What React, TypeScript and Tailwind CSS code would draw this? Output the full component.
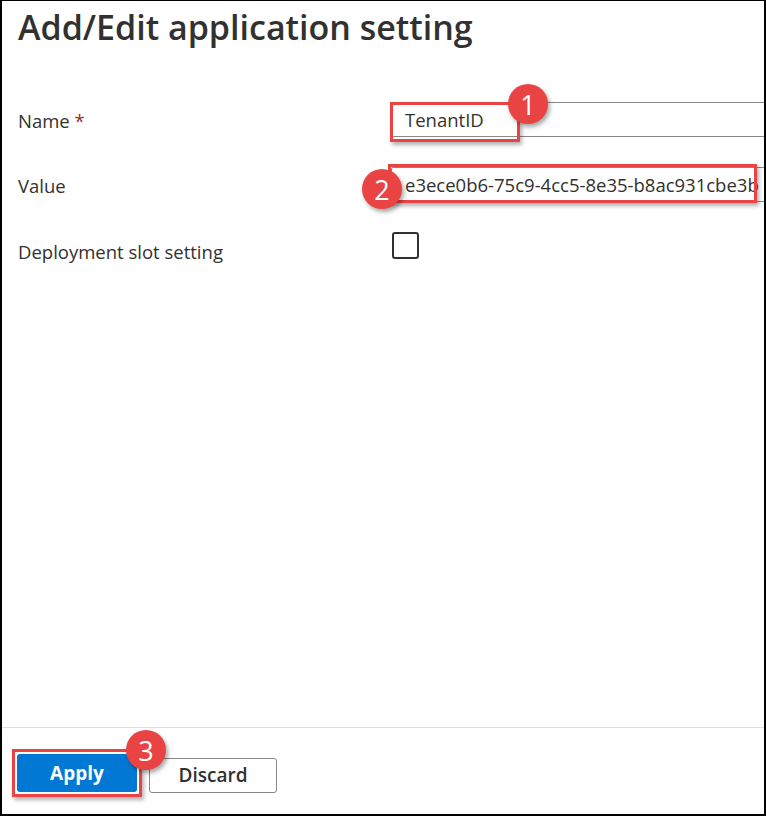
import React from "react";

const font = { fontFamily: '"Open Sans", "Noto Sans", sans-serif' };

const Badge = ({ n, className }: { n: string; className: string }) => (
  <div
    className={`absolute w-[40px] h-[40px] rounded-full bg-[#ea4344] text-white flex items-center justify-center text-[27px] leading-none shadow-[2px_3px_4px_rgba(0,0,0,0.35)] ${className}`}
  >
    {n}
  </div>
);

const App = () => {
  return (
    <div
      className="relative w-[766px] h-[816px] bg-white border-l-2 border-t border-r-2 border-b-2 border-black overflow-hidden flex flex-col text-[#323130]"
      style={font}
    >
      <h1 className="pl-[16px] pt-[2px] text-[34px] font-semibold leading-[48px] whitespace-nowrap">
        Add/Edit application setting
      </h1>

      <div className="mt-[51px] flex flex-col gap-[30px]">
        <div className="flex items-center h-[35px]">
          <label className="shrink-0 w-[389px] pl-[16px] text-[18.5px] pt-[2px]">
            Name <span className="text-[#a4262c]">*</span>
          </label>
          <div className="relative shrink-0">
            <div className="w-[420px] h-[35px] border border-[#8a8886] rounded-[2px] flex items-center pl-[13px] text-[18.5px] whitespace-nowrap">
              TenantID
            </div>
            <div className="absolute left-[-1px] top-0 w-[130px] h-[40px] border-[3px] border-[#ea4344] shadow-[2px_3px_4px_rgba(0,0,0,0.3)]" />
            <Badge n="1" className="left-[117px] top-[-18px]" />
          </div>
        </div>

        <div className="flex items-center h-[35px]">
          <label className="shrink-0 w-[389px] pl-[16px] text-[18.5px] pt-[2px]">Value</label>
          <div className="relative shrink-0">
            <div className="w-[420px] h-[35px] border border-[#8a8886] rounded-[2px] flex items-center pl-[13px] text-[18.5px] whitespace-nowrap">
              e3ece0b6-75c9-4cc5-8e35-b8ac931cbe3b
            </div>
            <div className="absolute left-[-3px] top-[-3px] w-[369px] h-[39px] border-[3px] border-[#ea4344] shadow-[2px_3px_4px_rgba(0,0,0,0.3)]" />
            <Badge n="2" className="left-[-29px] top-[2px]" />
          </div>
        </div>

        <div className="flex items-start h-[35px]">
          <label className="shrink-0 w-[389px] pl-[16px] text-[18.5px] pt-[6px]">Deployment slot setting</label>
          <div className="shrink-0 w-[27px] h-[27px] border-2 border-[#323130] rounded-[3px] ml-[1px]" />
        </div>
      </div>

      <div className="flex-1" />

      <div className="h-[87px] border-t border-[#e1dfdd] flex items-start pl-[15px] pt-[28px] gap-[12px]">
        <div className="relative">
          <div className="w-[130px] h-[48px] border-[3px] border-[#ea4344] -mt-[7px] -ml-[5px] shadow-[2px_3px_4px_rgba(0,0,0,0.3)] flex items-center justify-center">
            <button className="w-[120px] h-[38px] bg-[#0078d4] text-white text-[19px] font-bold rounded-[3px]">
              Apply
            </button>
          </div>
          <Badge n="3" className="left-[109px] top-[-26px]" />
        </div>
        <button className="w-[128px] h-[35px] mt-[2px] -ml-[5px] border border-[#8a8886] rounded-[3px] bg-white text-[19px] font-semibold text-[#323130]">
          Discard
        </button>
      </div>
    </div>
  );
};

export default App;
